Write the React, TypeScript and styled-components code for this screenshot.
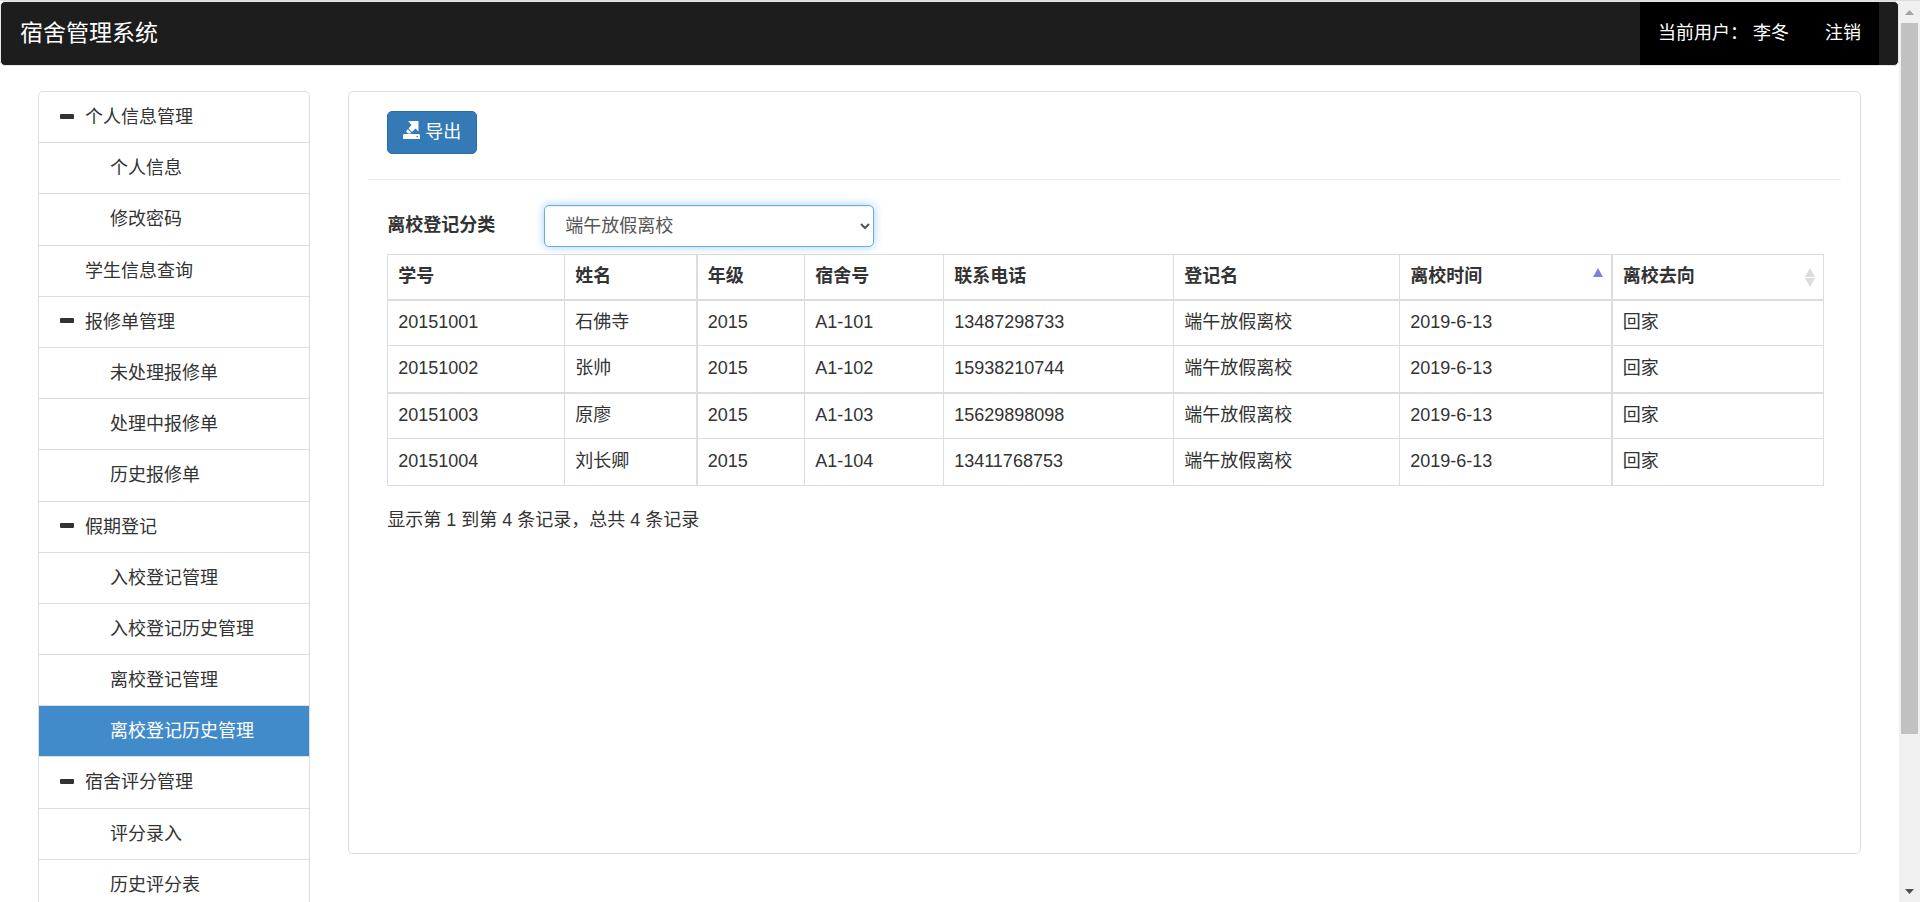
import React from 'react';
import styled, { createGlobalStyle } from 'styled-components';

const GlobalStyle = createGlobalStyle`
  *, *::before, *::after { box-sizing: border-box; }
  body {
    margin: 0;
    background: #fff;
    color: #333;
    font-family: "Liberation Sans", "Noto Sans CJK SC", sans-serif;
    font-size: 18px;
    line-height: 1.4;
  }
`;

const Window = styled.div`
  display: flex;
  height: 100vh;
  border-top: 1px solid #dcdcdc;
`;

const Page = styled.div`
  flex: 1;
  min-width: 0;
  overflow-y: auto;
  scrollbar-width: none;
`;

const Navbar = styled.header`
  display: flex;
  justify-content: space-between;
  height: 65px;
  margin-bottom: 25px;
  padding-right: 19px;
  border: 1px solid #e7e7e7;
  border-radius: 5px;
  background: #1d1d1d;
`;

const Brand = styled.a`
  display: flex;
  align-items: center;
  padding: 0 19px;
  color: #fff;
  font-size: 23px;
  text-decoration: none;
`;

const UserNav = styled.nav`
  display: flex;
  background: #000;
`;

const UserLink = styled.a`
  display: flex;
  align-items: center;
  padding: 0 18px;
  color: #fff;
  text-decoration: none;
  white-space: pre;
`;

const Columns = styled.div`
  display: grid;
  grid-template-columns: minmax(0, 1fr) minmax(0, 5fr);
  padding: 0 19px;
`;

const Column = styled.div`
  padding: 0 19px;
`;

const Menu = styled.ul`
  margin: 0;
  padding: 0;
  list-style: none;
  border: 1px solid #ddd;
  border-radius: 5px;
`;

const MenuItem = styled.li`
  & + & { border-top: 1px solid #ddd; }
`;

const MenuLink = styled.a<{ $child?: boolean; $active?: boolean }>`
  display: flex;
  align-items: center;
  padding: 13px 0 12px ${p => (p.$child ? '71px' : '21px')};
  background: ${p => (p.$active ? '#428bca' : 'transparent')};
  color: ${p => (p.$active ? '#fff' : '#333')};
  text-decoration: none;
`;

const MenuIcon = styled.span`
  display: flex;
  width: 25px;
`;

const Panel = styled.main`
  min-height: 763px;
  padding: 19px;
  border: 1px solid #ddd;
  border-radius: 5px;
`;

const Inset = styled.div`
  padding: 0 19px;
`;

const ExportButton = styled.button`
  display: flex;
  align-items: center;
  gap: 5px;
  height: 43px;
  padding: 0 15px;
  border: 1px solid #2e6da4;
  border-radius: 5px;
  background: #337ab7;
  color: #fff;
  font: inherit;

  svg { margin-bottom: 5px; }
`;

const Divider = styled.hr`
  margin: 25px 0;
  border: 0;
  border-top: 1px solid #eee;
`;

const FilterRow = styled.div`
  display: flex;
  align-items: center;
  margin-bottom: 7px;
`;

const FilterLabel = styled.label`
  width: 157px;
  font-weight: 700;
`;

const FilterSelect = styled.select`
  width: 23%;
  height: 42px;
  padding: 0 16px;
  border: 1px solid #66afe9;
  border-radius: 5px;
  background: #fff;
  box-shadow: inset 0 1px 1px rgba(0, 0, 0, 0.075), 0 0 10px rgba(102, 175, 233, 0.6);
  color: #555;
  font: inherit;
  outline: 0;
`;

const DataTable = styled.table`
  width: 100%;
  table-layout: fixed;
  border-collapse: collapse;

  th, td {
    height: 46px;
    padding: 0 10px;
    border: 1px solid #ddd;
    text-align: left;
  }
  th {
    height: 45px;
    padding-right: 7px;
    border-bottom-width: 2px;
  }
  th:nth-child(3), td:nth-child(3), th:nth-child(8), td:nth-child(8) { border-left-width: 2px; }
  tbody tr:nth-child(even) td { height: 47px; }
  tbody tr:nth-child(3) td { border-top-width: 2px; }
`;

const HeadCell = styled.div`
  display: flex;
  align-items: center;
  justify-content: space-between;
`;

const Summary = styled.p`
  margin: 22px 0 0;
`;

const Scrollbar = styled.div`
  display: flex;
  flex-direction: column;
  width: 21px;
  padding: 0 2px;
  background: #f0f0f0;
`;

const ScrollArrow = styled.div`
  display: flex;
  align-items: center;
  justify-content: center;
  height: 22px;
`;

const Thumb = styled.div`
  flex: 83;
  background: #c1c1c1;
`;

const Track = styled.div`
  flex: 17;
`;

type Entry = { text: string; kind: 'group' | 'plain' | 'child'; active?: boolean };

const menu: Entry[] = [
  { text: '个人信息管理', kind: 'group' },
  { text: '个人信息', kind: 'child' },
  { text: '修改密码', kind: 'child' },
  { text: '学生信息查询', kind: 'plain' },
  { text: '报修单管理', kind: 'group' },
  { text: '未处理报修单', kind: 'child' },
  { text: '处理中报修单', kind: 'child' },
  { text: '历史报修单', kind: 'child' },
  { text: '假期登记', kind: 'group' },
  { text: '入校登记管理', kind: 'child' },
  { text: '入校登记历史管理', kind: 'child' },
  { text: '离校登记管理', kind: 'child' },
  { text: '离校登记历史管理', kind: 'child', active: true },
  { text: '宿舍评分管理', kind: 'group' },
  { text: '评分录入', kind: 'child' },
  { text: '历史评分表', kind: 'child' },
];

const columns: { title: string; width: number; sort?: 'asc' | 'both' }[] = [
  { title: '学号', width: 177 },
  { title: '姓名', width: 132 },
  { title: '年级', width: 108 },
  { title: '宿舍号', width: 139 },
  { title: '联系电话', width: 230 },
  { title: '登记名', width: 226 },
  { title: '离校时间', width: 212, sort: 'asc' },
  { title: '离校去向', width: 212, sort: 'both' },
];

const rows = [
  ['20151001', '石佛寺', '2015', 'A1-101', '13487298733', '端午放假离校', '2019-6-13', '回家'],
  ['20151002', '张帅', '2015', 'A1-102', '15938210744', '端午放假离校', '2019-6-13', '回家'],
  ['20151003', '原廖', '2015', 'A1-103', '15629898098', '端午放假离校', '2019-6-13', '回家'],
  ['20151004', '刘长卿', '2015', 'A1-104', '13411768753', '端午放假离校', '2019-6-13', '回家'],
];

const MinusIcon = () => (
  <svg width="14" height="8" viewBox="0 0 14 8" aria-hidden="true">
    <rect x="0" y="0" width="14" height="5" rx="1" fill="#333" />
  </svg>
);

const ExportIcon = () => (
  <svg width="17" height="18" viewBox="0 0 17 18" fill="#fff" aria-hidden="true">
    <path d="M5 0h10.500v10.500l-3-3-3.500 3.500L5.500 7.500 8.500 4z" />
    <path d="M4.800 8.200l3.500 3.500-1 .8H5L3 10.200z" />
    <path fillRule="evenodd" d="M1 13h15l1 1v4H0v-4zM13.500 15v1h1.500v-1z" />
  </svg>
);

const SortIcon = ({ kind }: { kind: 'asc' | 'both' }) => (
  <svg width="12" height="20" viewBox="0 0 12 20" aria-hidden="true">
    <path d="M6 1l5 9H1z" fill={kind === 'asc' ? '#8080e0' : '#dcdcdc'} />
    {kind === 'both' && <path d="M1 11h10l-5 9z" fill="#dcdcdc" />}
  </svg>
);

export default function App() {
  return (
    <>
      <GlobalStyle />
      <Window>
        <Page>
          <Navbar>
            <Brand href="#">宿舍管理系统</Brand>
            <UserNav>
              <UserLink href="#">当前用户： 李冬</UserLink>
              <UserLink href="#">注销</UserLink>
            </UserNav>
          </Navbar>
          <Columns>
            <Column>
              <Menu>
                {menu.map(item => (
                  <MenuItem key={item.text}>
                    <MenuLink href="#" $child={item.kind === 'child'} $active={item.active}>
                      {item.kind !== 'child' && (
                        <MenuIcon>{item.kind === 'group' && <MinusIcon />}</MenuIcon>
                      )}
                      {item.text}
                    </MenuLink>
                  </MenuItem>
                ))}
              </Menu>
            </Column>
            <Column>
              <Panel>
                <Inset>
                  <ExportButton type="button">
                    <ExportIcon />
                    导出
                  </ExportButton>
                </Inset>
                <Divider />
                <Inset>
                  <FilterRow>
                    <FilterLabel htmlFor="category">离校登记分类</FilterLabel>
                    <FilterSelect id="category" defaultValue="端午放假离校">
                      <option>端午放假离校</option>
                    </FilterSelect>
                  </FilterRow>
                  <DataTable>
                    <colgroup>
                      {columns.map(c => (
                        <col key={c.title} width={c.width} />
                      ))}
                    </colgroup>
                    <thead>
                      <tr>
                        {columns.map(c => (
                          <th key={c.title} scope="col">
                            <HeadCell>
                              {c.title}
                              {c.sort && <SortIcon kind={c.sort} />}
                            </HeadCell>
                          </th>
                        ))}
                      </tr>
                    </thead>
                    <tbody>
                      {rows.map(r => (
                        <tr key={r[0]}>
                          {r.map((cell, i) => (
                            <td key={i}>{cell}</td>
                          ))}
                        </tr>
                      ))}
                    </tbody>
                  </DataTable>
                  <Summary>显示第 1 到第 4 条记录，总共 4 条记录</Summary>
                </Inset>
              </Panel>
            </Column>
          </Columns>
        </Page>
        <Scrollbar aria-hidden="true">
          <ScrollArrow>
            <svg width="9" height="5" viewBox="0 0 9 5">
              <path d="M4.500 0L9 5H0z" fill="#a3a3a3" />
            </svg>
          </ScrollArrow>
          <Thumb />
          <Track />
          <ScrollArrow>
            <svg width="9" height="5" viewBox="0 0 9 5">
              <path d="M0 0h9L4.500 5z" fill="#505050" />
            </svg>
          </ScrollArrow>
        </Scrollbar>
      </Window>
    </>
  );
}
